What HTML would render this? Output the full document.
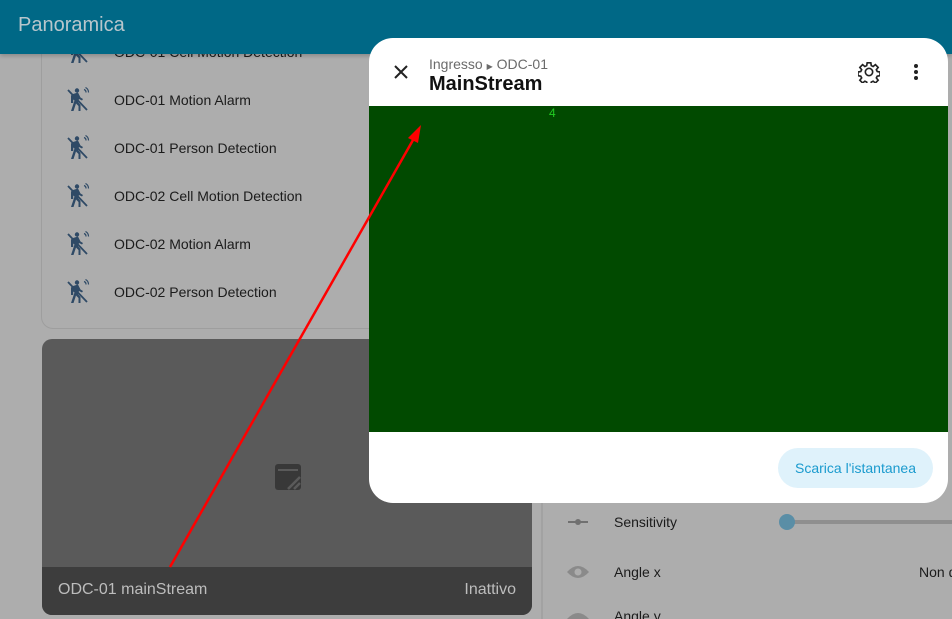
<!DOCTYPE html>
<html><head><meta charset="utf-8"><style>
*{margin:0;padding:0;box-sizing:border-box}
html{width:952px;height:619px;overflow:hidden}
body{width:952px;height:619px;overflow:hidden;background:#adadad;font-family:"Liberation Sans",sans-serif;position:relative}
.hdr{position:absolute;left:0;top:0;width:952px;height:54px;background:#006886;box-shadow:0 2px 4px rgba(0,0,0,.2);z-index:2}
.hdr span{position:absolute;left:18px;top:14px;font-size:20px;color:#b8c6cc}
.card1{position:absolute;left:41px;top:30px;width:500px;height:299px;border:1px solid #9e9e9e;border-radius:12px;background:#adadad}
.row{position:absolute;left:73px;font-size:14px;color:#1b1b1b}
.row svg{position:absolute;left:-8px;top:-5px}
.row span{position:absolute;left:41px;top:0;white-space:nowrap}
.cam{position:absolute;left:42px;top:339px;width:490px;height:276px;border-radius:10px;background:#5a5a5a;overflow:hidden}
.cam .bar{position:absolute;left:0;bottom:0;width:100%;height:48px;background:#3d3d3d;color:#bdbdbd;font-size:16px}
.rc{position:absolute;left:541px;top:330px;width:2px;height:289px;background:#a2a2a2}
.dlg{position:absolute;left:369px;top:38px;width:579px;height:465px;background:#fff;border-radius:24px;overflow:hidden;z-index:3}
.vid{position:absolute;left:0;top:68px;width:579px;height:326px;background:#014a00}
.btn{position:absolute;left:409px;top:410px;width:155px;height:40px;border-radius:20px;background:#dff2fb;color:#1b9bce;font-size:14px;text-align:center;line-height:40px}
.t{position:absolute;font-size:14px;color:#1b1b1b;white-space:nowrap}
</style></head><body>
<div class="hdr"><span>Panoramica</span></div>
<div class="card1"></div>
<svg width="0" height="0" style="position:absolute"><defs><g id="ic" fill="#2f4a66"><circle cx="12" cy="3.5" r="2.2"/><path d="M8 7l5-1.5 2.5 5 2.5 1.5-1 1.5-3-1.5-1 3 2.5 3v6h-2v-5l-2.5-2.5-2.5 7.5H6l3.5-10.5-1.3-1v3.5H6V8.5z"/><path d="M3 3l19 20" stroke="#2f4a66" stroke-width="1.8"/><path d="M19 2.5a3 3 0 0 1 2 3M20.5 0.5a5.5 5.5 0 0 1 3 5" stroke="#2f4a66" fill="none" stroke-width="1.2"/></g></defs></svg>
<div class="row" style="top:44px"><svg width="26" height="26"><use href="#ic"/></svg><span>ODC-01 Cell Motion Detection</span></div>
<div class="row" style="top:92px"><svg width="26" height="26"><use href="#ic"/></svg><span>ODC-01 Motion Alarm</span></div>
<div class="row" style="top:140px"><svg width="26" height="26"><use href="#ic"/></svg><span>ODC-01 Person Detection</span></div>
<div class="row" style="top:188px"><svg width="26" height="26"><use href="#ic"/></svg><span>ODC-02 Cell Motion Detection</span></div>
<div class="row" style="top:236px"><svg width="26" height="26"><use href="#ic"/></svg><span>ODC-02 Motion Alarm</span></div>
<div class="row" style="top:284px"><svg width="26" height="26"><use href="#ic"/></svg><span>ODC-02 Person Detection</span></div>
<div class="cam">
<svg style="position:absolute;left:232px;top:124px" width="28" height="28"><rect x="1" y="1" width="26" height="26" rx="3" fill="#383838"/><rect x="4" y="6" width="20" height="2" fill="#5a5a5a"/><path d="M14 26L26 14M20 26L26 20" stroke="#5a5a5a" stroke-width="2.5"/></svg>
<div class="bar"><span style="position:absolute;left:16px;top:14px">ODC-01 mainStream</span><span style="position:absolute;right:16px;top:14px">Inattivo</span></div></div>
<div class="rc"></div>
<svg style="position:absolute;left:566px;top:512px" width="24" height="20"><path d="M2 10h20" stroke="#707070" stroke-width="2"/><circle cx="12" cy="10" r="3" fill="#707070"/></svg>
<div class="t" style="left:614px;top:514px">Sensitivity</div>
<div style="position:absolute;left:787px;top:520px;width:165px;height:4px;background:#8f8f8f"></div>
<div style="position:absolute;left:779px;top:514px;width:16px;height:16px;border-radius:50%;background:#5a8ea6"></div>
<svg style="position:absolute;left:566px;top:562px" width="24" height="20"><path d="M1 10Q12 -2 23 10Q12 22 1 10z" fill="#8a8a8a"/><circle cx="12" cy="10" r="3.5" fill="#adadad"/></svg>
<div class="t" style="left:614px;top:564px">Angle x</div>
<div class="t" style="left:919px;top:564px">Non d</div>
<svg style="position:absolute;left:566px;top:609px" width="24" height="10"><path d="M1 10Q12 -2 23 10z" fill="#8a8a8a"/></svg>
<div class="t" style="left:614px;top:608px">Angle y</div>
<div class="dlg">
<svg style="position:absolute;left:24px;top:26px" width="16" height="16"><path d="M2 2L14 14M14 2L2 14" stroke="#222" stroke-width="2"/></svg>
<div style="position:absolute;left:60px;top:18px;font-size:14px;color:#6b6b6b">Ingresso <span style="font-size:8px">▶</span> ODC-01</div>
<div style="position:absolute;left:60px;top:35px;font-size:20px;color:#111;font-weight:bold">MainStream</div>
<svg style="position:absolute;left:489px;top:23px" width="22" height="22" viewBox="0 0 24 24"><path d="M12 8a4 4 0 1 0 0 8a4 4 0 1 0 0-8zM10 2h4l.5 3 2 1 2.5-2 3 3-2 2.5 1 2 3 .5v4l-3 .5-1 2 2 2.5-3 3-2.5-2-2 1-.5 3h-4l-.5-3-2-1-2.5 2-3-3 2-2.5-1-2-3-.5v-4l3-.5 1-2-2-2.5 3-3 2.5 2 2-1z" fill="none" stroke="#222" stroke-width="1.8"/></svg>
<div style="position:absolute;left:545px;top:26px;width:4px;height:4px;border-radius:50%;background:#222;box-shadow:0 6px 0 #222,0 12px 0 #222"></div>
<div class="vid"><span style="position:absolute;left:180px;top:0;color:#2c2;font-size:12px">4</span></div>
<div class="btn">Scarica l'istantanea</div>
</div>
<svg style="position:absolute;left:0;top:0;z-index:4" width="952" height="619"><path d="M170 567L417 133" stroke="#f00" stroke-width="2.5"/><path d="M421 125L408 138L418 143z" fill="#f00"/></svg>
</body></html>
